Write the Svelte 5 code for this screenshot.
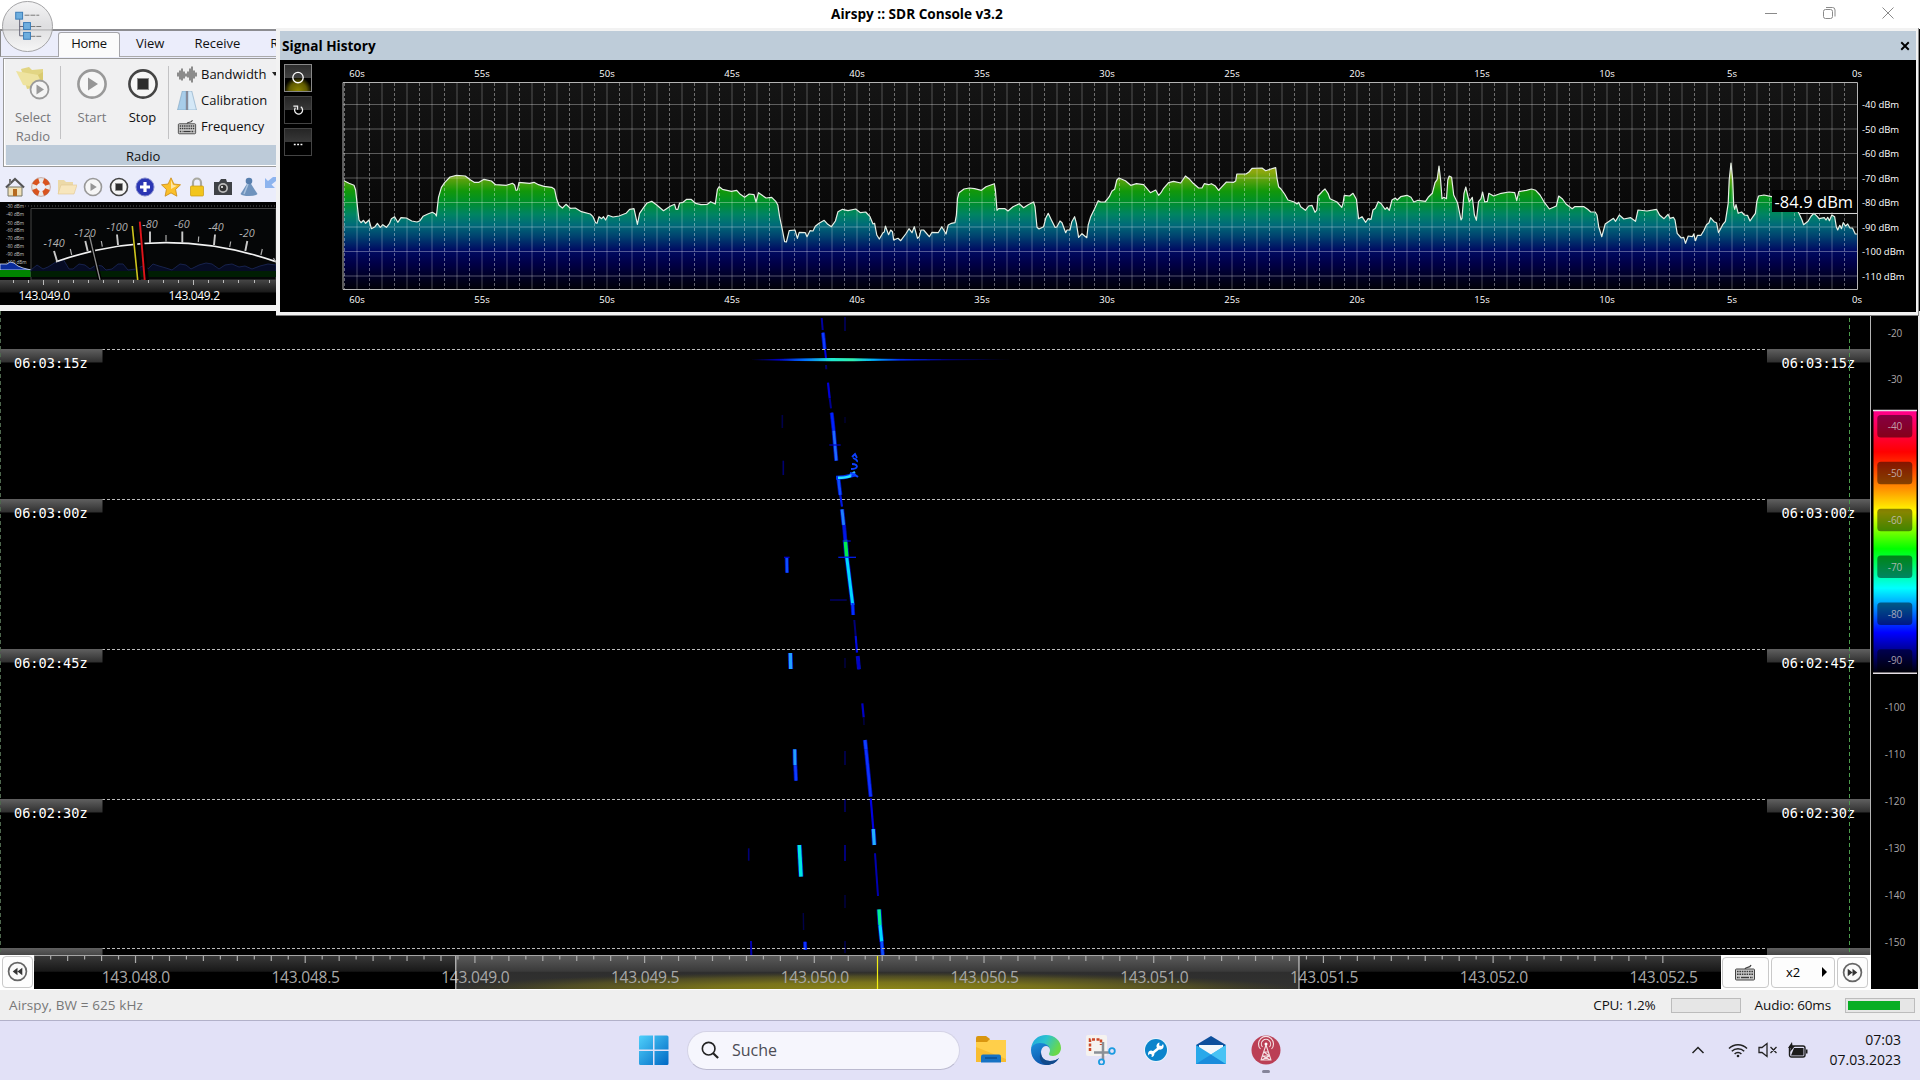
<script lang="ts">
	const seconds = [60, 55, 50, 45, 40, 35, 30, 25, 20, 15, 10, 5, 0];
	const solidLines = Array.from({ length: 60 }, (_, i) => 357 + i * 25);
	const dashedLines = Array.from({ length: 61 }, (_, i) => 344.5 + i * 25);
	const levels = Array.from({ length: 8 }, (_, i) => ({ y: 104.5 + i * 24.5, label: `${-40 - i * 10} dBm` }));

	const trace =
		'344,180.7 349,183.3 354,185.3 355.6,190 358,211.7 359,220 361,222.7 363.5,220.3 365.6,223.3 369,220 371.4,228.7 375,226.7 377.4,223.3 380.3,227.3 382.8,224.7 386.4,227.3 389.6,223.3 391.4,218.7 394.6,216.7 397.8,222.3 401,217.7 406.4,218 411.7,221 417,222 420,220.7 423,216.3 427.8,214 432.4,212.3 435.3,214 436.4,216 438.5,197.3 441.4,187.3 444.6,182.7 450,177 456.4,175.3 465.3,176 470.6,180 474.2,182.3 479,182.3 484,179.3 491.4,181 495.6,184.7 506.4,185.3 512.4,183.3 514.6,185 516,190.3 517.4,190 519,182.3 529.6,183.3 534,182.3 538.5,184.7 544,186.3 551.7,187.3 554.6,189.3 556.7,199.3 559,205.3 562.4,208 566,204.3 570.3,208.3 575.3,208 581.4,211.7 590.3,214 593,216.7 595.6,222.7 597,223.3 599,216.7 601.7,218.7 603.5,216.7 605.6,220 608,215.3 613,217 619,216 626,213.3 629.6,209.3 634,208.7 637.4,224.3 639.6,213.3 643,208.3 646.7,203.3 651.7,201.3 656.4,204.7 663.5,210.7 670.6,206 674.6,204.3 676,209.3 677.8,209.3 679.6,203 683,202.3 686.7,199.3 691,199.3 695.6,203.3 701,204.7 707.4,204.3 710.6,201.7 715.3,204 717.4,189.3 719.2,186.7 722.4,189.3 731.4,191.3 736.7,190.3 740.3,194.3 744.6,197.3 749.2,194 754,194.7 756,202 758.5,192.7 766,198 771.7,197.3 776,201.7 777.8,205 779.6,216.7 782.4,230 784.6,241.7 786.4,242 789.2,230.7 795,230 797.4,238.3 799.2,232.3 805.3,232.7 807,236.7 810,230.7 813,231 815.3,226.3 819,223.3 824.2,220.3 827.8,224.3 831.4,226.7 835.4,221 838,211.7 842.5,209.3 848,210.7 855.7,209 860.4,212.7 865.7,212 870,216.7 873,224 874.6,223.3 876.8,235 879.3,239 883,232.7 884.3,232 885.4,226 888.6,234.7 890.7,230 892.5,231.7 893.6,240 898,238.3 900.7,240.7 905.7,234 909,228.7 912,232.7 914.3,226.7 917.5,238.3 919.3,236.7 921,230 923.6,230 929.3,236.7 932,232.3 938.2,232.7 941.8,226.7 946,234 948.2,225 951.4,223.3 955,222.7 956.4,215 957.5,198.3 959,192.7 964,189 969.3,188 974.6,188.7 981.4,190.3 986,186.7 994.3,183.7 995.4,190 997,210.3 998.6,208.7 1005,208.7 1008,211 1013,206.7 1019.3,203.7 1023.6,207.7 1028.2,204.7 1033.6,202 1035,206.7 1037,227.3 1039,229 1043.6,226.7 1045.7,218.3 1048.2,213.3 1051.4,220 1055,227.3 1056.8,227 1060,221 1062,222.7 1065.7,232.7 1067,230 1070,230 1071.8,221.7 1074.6,216.7 1076.4,223.3 1078.6,237.3 1082,233.7 1086.8,237.7 1088.2,225 1090.7,216.7 1094.3,209.3 1098.2,200.7 1100.7,202 1105,202 1109.3,196.7 1112,191 1114.6,189.3 1116.8,180 1119,178 1125.4,180.7 1130.7,185.3 1136.4,183.7 1143.6,184.7 1147,188.7 1150.4,192.7 1155.7,190 1158.6,195.3 1161,192.7 1163.6,188.3 1168.6,182.7 1173.6,181.3 1180.7,183 1185.4,176 1189,178.7 1193.2,183.3 1198.6,188 1202,188 1204.3,183.7 1208.6,184.7 1211.4,183.7 1215,185.7 1218.6,190.3 1222,186.7 1226.4,182 1233.6,182.3 1235.7,181 1236.8,174 1246,174 1249,172 1252,168.3 1262,168 1265.7,170.7 1273,168.3 1275.7,167.7 1277,178.3 1278.6,186.7 1280.7,188.7 1284.6,194 1288,200 1294.3,202 1297,204 1298.6,202.3 1300.7,206.7 1305.4,210.3 1308.6,206 1312,205.3 1315,212.3 1316.8,210 1318,195.7 1320,194 1323,190.7 1325,189 1328,193.3 1330,198.7 1337,202 1341.8,207.3 1343,203.3 1344.3,195.3 1349.6,196 1353,193.3 1356.4,199.3 1358.6,218.7 1362,216.7 1365.7,222.3 1368,218.7 1371,219.3 1373,210 1375.4,208.3 1378.2,201.7 1381,203.5 1385.2,209.3 1387,207.5 1389.3,210.3 1392,200 1395.2,198 1397.2,200 1400.7,196.7 1407,195.3 1411,197.3 1413.8,202 1418,200.3 1425.5,201.3 1428.2,197.3 1432.3,193.3 1435,182.7 1437.2,179.3 1439,166 1440.6,180 1442,198.7 1444,197.3 1446.5,198.7 1447.8,180 1449.2,176 1451.6,177.3 1453.7,195 1457.5,202.7 1461,220 1462,218.3 1464,193.3 1465.8,187 1469.2,202 1472.3,197.3 1474.4,215 1476.4,220.3 1478.5,201.7 1481,198.7 1482.6,192 1484.7,202 1487.4,201.3 1488.8,193.3 1493.6,196 1501.2,193.3 1509,192 1514.7,192.7 1516.7,200.7 1518.8,191.7 1526.4,190.3 1531.5,189 1535.7,190.3 1540,195 1544.6,202.7 1549.4,209 1556.3,206 1558.7,196 1562.5,199 1566,204 1572.2,208.7 1574.6,206.7 1584,206.7 1587.7,209.3 1590.8,212 1595.2,212 1597,215 1598.7,226.7 1601.8,236.7 1605.2,224 1613.5,218.3 1615.6,221.3 1619.3,215 1623.8,219 1630.7,217.7 1635.5,221.3 1638,210 1647,211 1656.5,209.3 1659.6,215 1664,218.7 1668,214.3 1670,218.3 1673.4,217.3 1675,220 1677.2,233.3 1681.3,238 1683.7,237.3 1685.5,243.3 1688.2,236 1692.4,236.7 1693.7,234 1695.5,240.7 1697.5,235.3 1701,235.3 1703.7,230.7 1706.5,224.7 1709,222.7 1710.6,217.7 1714,221.7 1716.5,222.7 1718.5,232.7 1722.7,224.7 1725.4,221.3 1728.2,203.3 1729.2,180 1731,163 1732.7,180 1733.7,205 1734.7,209.3 1736,204.7 1738.2,213.3 1741.6,212 1744.4,215 1747.5,215.3 1750,221 1753,216.7 1755.4,213.3 1756.8,201.7 1758.5,196 1764,195 1771.6,196.7 1783,200 1798.4,212 1802,220 1803.6,224.7 1808,221.3 1811.2,216 1814,213.3 1817.4,216.7 1819,218.7 1824.3,217.7 1826,220 1827.7,217.3 1829.4,220.7 1831.8,215 1834.6,216.7 1836.3,226.7 1837.7,230 1839.8,225.3 1841.5,228.7 1843.2,222.7 1845.6,226 1847.7,224 1850,228 1852.5,228 1855.3,234 1857,234';

	// x1, y1, x2, y2, width, colour
	type Echo = [number, number, number, number, number, string];
	const echoes: Echo[] = [
		[821.7, 318, 822.7, 330, 2, '#0000a0'],
		[823, 332.7, 824.7, 349.3, 2.4, '#0a3cff'],
		[825, 350, 826, 358.3, 2, '#0000e0'],
		[826, 365, 826.3, 369.3, 2, '#000068'],
		[828, 382.7, 829.7, 398.3, 2.2, '#0000d8'],
		[829.7, 398.3, 831, 408.3, 2, '#000090'],
		[831.7, 412.7, 833.7, 430.7, 2.4, '#0024ff'],
		[833.7, 430.7, 836.3, 460.7, 2.6, '#1e6aff'],
		[829.3, 445, 840.7, 445, 1.2, '#0000c0'],
		[838.3, 478, 840.3, 495, 2.6, '#0a50ff'],
		[840.3, 495, 842, 506.7, 2.2, '#0018e0'],
		[842, 509.3, 843.7, 525, 2.8, '#1e80ff'],
		[844, 525, 845.3, 540, 2.4, '#0018e8'],
		[846.7, 556.7, 852.7, 605, 3, '#00d8ff'],
		[845.3, 540, 846.7, 556.7, 3.6, '#00ee50'],
		[852.5, 603, 853.2, 615, 2.4, '#0030ff'],
		[842.7, 541, 850.7, 541, 1.2, '#0000e0'],
		[838.3, 557.3, 856, 557.3, 1.2, '#0020ff'],
		[830, 600, 846.7, 600, 1.6, '#000060'],
		[854.3, 620, 855.7, 636, 2, '#000078'],
		[855.7, 636, 857, 652.7, 2.2, '#0008e0'],
		[857.7, 656, 859, 669.3, 2.4, '#0000c8'],
		[862.3, 703.3, 863.7, 717.3, 2.2, '#0000c8'],
		[863.7, 717.3, 864, 725, 1.6, '#000040'],
		[865, 740, 866, 749.3, 2.8, '#1040ff'],
		[866, 749.3, 870.7, 796.7, 2.6, '#0a32ff'],
		[870.7, 798.3, 873.3, 829, 2.2, '#0000e0'],
		[873.3, 829, 874.3, 845, 3.2, '#20b0ff'],
		[875, 853.3, 878, 896, 2, '#0000b0'],
		[879, 909.3, 880, 925, 3.4, '#00f090'],
		[880, 925, 881.7, 941.7, 3.2, '#00d8ff'],
		[881.7, 941.7, 882.7, 955, 2.6, '#0a50ff'],
		[786.7, 557.3, 787, 572.7, 2.4, '#0a50ff'],
		[784, 557.3, 789.6, 557.3, 1.2, '#0000d0'],
		[790.3, 653, 790.7, 669, 3.4, '#20a0ff'],
		[794.7, 749.3, 795, 765.3, 3, '#20a0ff'],
		[795.3, 765.3, 796, 780.7, 2.6, '#0a3cff'],
		[799.3, 845, 801, 876.7, 3.6, '#00e8e0'],
		[805, 941.7, 805.3, 950, 2.4, '#0a30ff'],
		[803.3, 913, 803.6, 930, 1.4, '#000048'],
		[748.7, 848.3, 748.7, 860.7, 1.6, '#000078'],
		[751, 941, 751.3, 955, 2, '#0000b0'],
		[782.3, 415, 782.3, 428, 1.6, '#000048'],
		[783.3, 460.7, 783.3, 475, 1.6, '#000070'],
		[845, 317, 845, 331, 1.6, '#000060'],
		[845, 417, 845, 423, 1.6, '#000030'],
		[845, 658, 845, 668, 1.6, '#000040'],
		[845, 751, 845, 765, 1.6, '#000058'],
		[845, 799, 845, 812, 1.6, '#000068'],
		[845, 845, 845, 861, 1.8, '#000088'],
		[845, 895, 845, 908, 1.6, '#000040'],
		[845, 941, 845, 953, 1.6, '#000050']
	];
	// the stronger echoes bleed into a blue fringe
	const strong = echoes.filter((e) => e[4] > 2.3);

	const times = [
		{ y: 349.5, label: '06:03:15z' },
		{ y: 499.5, label: '06:03:00z' },
		{ y: 649.5, label: '06:02:45z' },
		{ y: 799.5, label: '06:02:30z' },
		{ y: 948.5, label: '' }
	];

	const scale = Array.from({ length: 14 }, (_, i) => ({ value: -20 - i * 10, y: 332.8 + i * 46.85 }));

	const freqs = ['143.048.0', '143.048.5', '143.049.0', '143.049.5', '143.050.0', '143.050.5', '143.051.0', '143.051.5', '143.052.0', '143.052.5'];
	const ticks = Array.from({ length: 97 }, (_, i) => ({
		x: 33.7 + i * 16.97,
		h: (i - 6) % 10 === 0 ? 7 : i % 2 === 0 ? 5 : 3.5
	}));

	const dial = [
		{ label: '-140', x: 54, y: 247, x1: 54, y1: 251, x2: 57.3, y2: 262 },
		{ label: '-120', x: 85, y: 237, x1: 85.3, y1: 241, x2: 87.7, y2: 251 },
		{ label: '-100', x: 117, y: 231, x1: 117, y1: 234.5, x2: 118, y2: 245 },
		{ label: '-80', x: 150, y: 228, x1: 150, y1: 231.5, x2: 150, y2: 243 },
		{ label: '-60', x: 182, y: 228, x1: 182.3, y1: 231.5, x2: 182.3, y2: 243 },
		{ label: '-40', x: 216, y: 231, x1: 215, y1: 234.5, x2: 214, y2: 245 },
		{ label: '-20', x: 247, y: 237, x1: 247.3, y1: 241, x2: 245.3, y2: 251 }
	];
	const miniLevels = [206, 214, 223, 230, 238, 246, 254, 262.5];
</script>

{#snippet play(dark: boolean)}
	<svg viewBox="0 0 32 32">
		<circle cx="16" cy="16" r="13.6" fill="#f6f6f6" stroke={dark ? '#444' : '#999'} stroke-width="2.6" />
		{#if dark}
			<rect x="10.5" y="10.5" width="11" height="11" fill="#2c2c2c" stroke="#888" />
		{:else}
			<path d="M12 9.5v13l10-6.5z" fill="#969696" />
		{/if}
	</svg>
{/snippet}

{#snippet keyboard()}
	<svg viewBox="0 0 22 18">
		<path d="M11 6c1-3 5 0 6-4" fill="none" stroke="#444" stroke-width="1.2" />
		<rect x="1.5" y="6" width="19" height="11" rx="1" fill="#ccc" stroke="#444" />
		<path d="M3 8.5h16M3 11.2h16M3 14.5h3M16 14.5h3" stroke="#3a3a3a" stroke-width="1.5" stroke-dasharray="1.6 .8" />
		<path d="M7 14.5h8" stroke="#3a3a3a" stroke-width="1.4" />
	</svg>
{/snippet}

<div class="screen">
	<header class="titlebar">
		<h1>Airspy :: SDR Console v3.2</h1>
		<svg class="caption" viewBox="0 0 150 28" fill="none" stroke="#8a8a8a">
			<path d="M15 14.5h12" />
			<rect x="73.5" y="10.5" width="9" height="9" rx="2" />
			<path d="M76 8.5h6.5a2.5 2.5 0 0 1 2.5 2.5v6.500" />
			<path d="M132.5 8.500l11 11m0-11l-11 11" />
		</svg>
	</header>

	<section class="ribbon">
		<nav class="tabs">
			<span class="tab active">Home</span>
			<span class="tab view">View</span>
			<span class="tab receive">Receive</span>
			<span class="tab">Rec</span>
		</nav>
		<div class="panel">
			<div class="groups">
				<div class="big select dim">
					<svg viewBox="0 0 34 34">
						<path d="M5 3l8-2 3 3 11-1v17l-16 3z" fill="#e2d583" />
						<path d="M0 5l22 4 5 13-20-3z" fill="#eee3a0" />
						<path d="M22 9l5-3v12z" fill="#d9ca70" />
						<circle cx="23.5" cy="23.5" r="9" fill="#f4f4f4" stroke="#9a9a9a" stroke-width="1.8" />
						<path d="M20.5 18.5v10l7.500-5z" fill="#999" />
					</svg>
					<span>Select<br />Radio</span>
				</div>
				<i class="rule"></i>
				<div class="big start dim">{@render play(false)}<span>Start</span></div>
				<div class="big stop">{@render play(true)}<span>Stop</span></div>
				<i class="rule"></i>
				<div class="rows">
					<div class="row">
						<svg viewBox="0 0 20 18"><path d="M1 7v4M3 5v9M5 3v12M7 6v7M9 8v3M11 6v6M13 3v12M15 1v16M17 5v8M19 7v4" stroke="#555" stroke-width="1.3" /></svg>
						Bandwidth <b class="caret"></b>
					</div>
					<div class="row">
						<svg viewBox="0 0 20 20"><path d="M5 0h4v20H0z" fill="#a8cdea" stroke="#7aa0be" stroke-width=".6" /><path d="M15 0h-4v20h9z" fill="#d4e8f7" stroke="#7aa0be" stroke-width=".6" /><path d="M10 0v20" stroke="#667" stroke-width="1.4" /></svg>
						Calibration
					</div>
					<div class="row">{@render keyboard()} Frequency</div>
				</div>
			</div>
			<div class="group-name">Radio</div>
		</div>
		<div class="quick">
			<svg viewBox="0 0 20 20"><path d="M3 10h14v9H3z" fill="#efe0b8" stroke="#776" /><path d="M1 10.5L10 2l9 8.5" fill="none" stroke="#555" stroke-width="2.2" /><path d="M4 2h2v5H4z" fill="#777" /><path d="M8 12h4v7H8z" fill="#b56a20" /></svg>
			<svg viewBox="0 0 20 20"><circle cx="10" cy="10" r="6.8" fill="none" stroke="#e8e8e8" stroke-width="5" /><circle cx="10" cy="10" r="6.8" fill="none" stroke="#d9531e" stroke-width="5" stroke-dasharray="6.2 4.48" stroke-dashoffset="-2.2" /><circle cx="10" cy="10" r="9.4" fill="none" stroke="#a76a50" stroke-width=".5" /></svg>
			<svg viewBox="0 0 20 20"><path d="M1 3h6l2 2h7v12H1z" fill="#ecd9a8" /><path d="M4 8h16l-3 9H1z" fill="#f7e6bd" stroke="#e0c892" stroke-width=".6" /></svg>
			{@render play(false)}
			{@render play(true)}
			<svg viewBox="0 0 20 20"><circle cx="10" cy="10" r="9" fill="#2b36b4" stroke="#8088cc" /><path d="M10 5v10M5 10h10" stroke="#fff" stroke-width="3.2" /></svg>
			<svg viewBox="0 0 20 20"><path d="M10 .8l2.900 6.200 6.600.8-4.900 4.600 1.300 6.800-5.900-3.300-5.900 3.300 1.300-6.800L.5 7.800l6.600-.8z" fill="#fbc02a" stroke="#c98a16" stroke-width=".8" /><path d="M10 3l2 5 4 .8-6 3.200z" fill="#fff" opacity=".6" /></svg>
			<svg viewBox="0 0 20 20"><path d="M6 10V5.500a4 4 0 0 1 8 0V10" fill="none" stroke="#a9a9a0" stroke-width="2.2" /><rect x="3.5" y="9" width="13" height="10" rx="1" fill="#f2c51c" stroke="#c99a10" stroke-width=".7" /></svg>
			<svg viewBox="0 0 20 20"><path d="M1 5h5l2-3h5l1 3h5v13H1z" fill="#3f4246" /><circle cx="10" cy="11" r="5" fill="#bbb" /><circle cx="10" cy="11" r="3.3" fill="#333" /><circle cx="9" cy="10" r="1" fill="#fff" /></svg>
			<svg viewBox="0 0 20 20"><path d="M8.5 6h3l7 11a9 3 0 0 1-17 0z" fill="#6f93bd" /><circle cx="10" cy="4" r="3.3" fill="#587fae" /><path d="M9 7l-4 10" stroke="#a9c2de" stroke-width="1.5" /></svg>
			<svg viewBox="0 0 20 20"><path d="M0 1v10h10l-3.500-3.500L16 0H8L3 4z" fill="#8db4ee" /></svg>
		</div>
		<svg class="meter" viewBox="0 202 276 78">
			<rect y="202" width="276" height="78" fill="#020202" />
			<path d="M25 206h251" stroke="#555" stroke-width="1" stroke-dasharray="1 2" />
			<g font-size="4.6" fill="#c4c4c4">
				{#each miniLevels as y, i}
					<text x="6" y={y + 1.5}>{-30 - i * 10} dBm</text>
				{/each}
			</g>
			<path d="M0 270v-6l7 0 3-2 4 1 4 3 5 2 8 2z" fill="#0a2c9c" stroke="#dbe6ff" stroke-width=".8" />
			<rect y="270" width="31" height="7" fill="#008400" />
			<path d="M31 280V208.500H276V280z" fill="#050607" stroke="#444" />
			<path d="M31 270L37 265 43 269 48 267 56 262 63 259 69 269 73 269 79 264 85 265 90 269 96 265 102 266 106 270 112 269 118 264 123 264 128 270 136 269 145 265 148 269 153 264 159 266 166 268 172 270 180 264 186 265 191 269 199 265 206 263 212 264 219 269 225 265 232 264 239 267 245 266 252 269 260 266 268 264 276 265V272H31z" fill="#060b24" stroke="#17224c" stroke-linejoin="round" />
			<path d="M31 271h245v6H31z" fill="#001e03" />
			<path d="M56 261.700Q166 223.700 276 261.700" fill="none" stroke="#f2f2f2" stroke-width="1.7" />
			{#each dial as d}
				<path d="M{d.x1} {d.y1}L{d.x2} {d.y2}" stroke="#c9c9c9" stroke-width="1.9" />
				<text class="dial" x={d.x} y={d.y}>{d.label}</text>
			{/each}
			<path d="M70.3 249l1.400 6M101.300 241l1 5.700M166 235v6.500M198.700 236.500l-.4 5.500M230.700 241.500l-1 5.500M262.300 249l-1.400 6M273.500 258l2 4" stroke="#aaa" stroke-width="1.2" />
			<path d="M92 246l8 34M134 232l5 48M141 232l6 48" stroke="#000" stroke-width="4" />
			<path d="M89.3 235l10.700 45" stroke="#8a8a8a" stroke-width="1.3" />
			<path d="M132.3 226l5.400 54" stroke="#cfc51e" stroke-width="1.6" />
			<path d="M139.8 221.700l4.900 58.300" stroke="#e0141a" stroke-width="1.9" />
		</svg>
		<svg class="mini-axis" viewBox="0 280 276 25">
			<path d="M13.5 280v3M28.500 280v3M43.500 280v5M58.500 280v3M73.500 280v3M88.500 280v3M103.500 280v3M118.500 280v3M133.500 280v3M148.500 280v3M163.500 280v3M178.500 280v3M193.500 280v5M208.500 280v3M223.500 280v3M238.500 280v3M254.500 280v3M269.500 280v3" stroke="#bbb" />
			<text x="18.5" y="300" textLength="51.5">143.049.0</text>
			<text x="168.5" y="300" textLength="51.5">143.049.2</text>
		</svg>
	</section>

	<svg class="orb" viewBox="0 0 54 54">
		<defs><linearGradient id="orb" x2="0" y2="1"><stop offset="0" stop-color="#f4f4f5" /><stop offset=".5" stop-color="#dedee0" /><stop offset="1" stop-color="#f6f6f6" /></linearGradient></defs>
		<circle cx="27" cy="27" r="25.5" fill="url(#orb)" stroke="#a2a2a4" />
		<path d="M1 30.5h52" stroke="#999" stroke-width=".8" />
		<path d="M19 17v19.500h5M19 27h5" fill="none" stroke="#667" />
		<path d="M24 15.5h15M30 27h11M30 37h11" stroke="#777" stroke-dasharray="5 1" />
		<g fill="#6eaede" stroke="#3a7cb8"><rect x="15" y="12.5" width="7" height="7" /><rect x="23" y="23" width="7" height="7" /><rect x="23" y="33" width="7" height="7" /></g>
	</svg>

	<section class="fall">
		<svg class="waterfall" viewBox="0 311 1871 644">
			<defs>
				<linearGradient id="flash" x1="0" x2="1">
					<stop offset="0" stop-color="#000018" />
					<stop offset=".1" stop-color="#0000c0" />
					<stop offset=".2" stop-color="#0070ff" />
					<stop offset=".3" stop-color="#20e8d0" />
					<stop offset=".38" stop-color="#30f0b0" />
					<stop offset=".46" stop-color="#00b0ff" />
					<stop offset=".56" stop-color="#0028f0" />
					<stop offset=".75" stop-color="#000078" />
					<stop offset="1" stop-color="#000010" />
				</linearGradient>
				<linearGradient id="plate" x2="0" y2="1"><stop offset="0" stop-color="#606060" /><stop offset="1" stop-color="#2e2e2e" /></linearGradient>
				<filter id="soft" filterUnits="userSpaceOnUse" x="700" y="311" width="400" height="644"><feGaussianBlur stdDeviation=".45" /></filter>
			</defs>
			<g filter="url(#soft)">
				{#each strong as [x1, y1, x2, y2, w]}
					<path d="M{x1} {y1}L{x2} {y2}" stroke="#0010e0" stroke-opacity=".75" stroke-width={w + 1.6} />
				{/each}
				{#each echoes as [x1, y1, x2, y2, w, colour]}
					<path d="M{x1} {y1}L{x2} {y2}" stroke={colour} stroke-width={w} />
				{/each}
				<path d="M836 477.800q8 0 15-2.200l4.500-1" fill="none" stroke="#0030f0" stroke-width="4" />
				<path d="M838 477.800q8 0 13-2" fill="none" stroke="#28e0ff" stroke-width="2.4" />
				<path d="M850 475l5-3" stroke="#28b0ff" stroke-width="2.4" />
				<path d="M852 457l3-3 2 4M853 458q5 2 4 4M852 464q5 0 5 3M851 469q5 0 6-2M850 473q5 1 8 4" fill="none" stroke="#0a40ff" stroke-width="1.8" />
				<path d="M751.7 359.500q40-1.400 80-1.600 20 0 50 .8 70 .3 135 .8-70 1-135 1.200-30 .6-50 .6-40-.2-80-1.200z" fill="url(#flash)" />
			</g>
			{#each times as t}
				<path d="M102 {t.y}H1766" stroke="#bcbcbc" stroke-dasharray="3 2" />
				<rect x="0" y={t.y - 0.5} width="102.5" height="13.5" fill="url(#plate)" />
				<rect x="1767" y={t.y - 0.5} width="103.5" height="13.5" fill="url(#plate)" />
				<text x="14" y={t.y + 18}>{t.label}</text>
				<text x="1781.5" y={t.y + 18}>{t.label}</text>
			{/each}
			<path d="M.5 311V955" stroke="#4d664d" stroke-dasharray="4 3" />
			<path d="M1849.5 311V953" stroke="#4c9a4c" stroke-dasharray="4 3" />
			<path d="M1870.5 311V955" stroke="#b4b4b4" />
		</svg>

		<div class="axis">
			<button class="rewind" aria-label="Back">
				<svg viewBox="0 0 24 24"><circle cx="12" cy="12" r="9.3" fill="#fafafa" stroke="#666" stroke-width="1.8" /><path d="M12 8v8l-5-4zM17 8v8l-5-4z" fill="#333" /></svg>
			</button>
			<svg class="freq" viewBox="34 955 1687 34">
				<defs>
					<linearGradient id="band" x2="0" y2="1"><stop offset="0" stop-color="#3a3a3a" /><stop offset=".48" stop-color="#181818" /><stop offset=".5" stop-color="#000" /></linearGradient>
					<linearGradient id="lit" x2="0" y2="1"><stop offset="0" stop-color="#5c5c5c" /><stop offset=".48" stop-color="#3a3a3a" /><stop offset=".5" stop-color="#2e2e2e" /><stop offset="1" stop-color="#323230" /></linearGradient>
					<radialGradient id="glow" cx=".5" cy="1" r=".5"><stop offset="0" stop-color="#8c8618" /><stop offset=".4" stop-color="#857e18" stop-opacity=".85" /><stop offset=".75" stop-color="#77701a" stop-opacity=".45" /><stop offset="1" stop-color="#555018" stop-opacity="0" /></radialGradient>
				</defs>
				<rect x="34" y="955" width="1687" height="34" fill="url(#band)" />
				<rect x="456" y="955" width="843" height="34" fill="url(#lit)" />
				<rect x="456" y="955" width="843" height="34" fill="url(#glow)" />
				<path d="M34 955.5H1721" stroke="#a5a5a5" />
				{#each ticks as t}
					<path d="M{t.x} 956v{t.h}" stroke="#aaa" stroke-width="1.2" />
				{/each}
				{#each freqs as f, i}
					<text x={101.7 + i * 169.75} y="983" textLength="68.5">{f}</text>
				{/each}
				<path d="M455.8 956v33M1299 956v33" stroke="#e4e4e4" />
				<path d="M877.5 956v33" stroke="#f2ee12" stroke-width="1.2" />
			</svg>
			<div class="zoom">
				<button class="kbd" aria-label="Keyboard">{@render keyboard()}</button>
				<button class="factor"><span>x2</span><i></i></button>
				<button class="forward" aria-label="Forward">
					<svg viewBox="0 0 24 24"><circle cx="12" cy="12" r="9.3" fill="#fafafa" stroke="#666" stroke-width="1.8" /><path d="M7 8v8l5-4zM12 8v8l5-4z" fill="#333" /></svg>
				</button>
			</div>
		</div>

		<svg class="scale" viewBox="1871 311 49 678">
			<defs>
				<linearGradient id="heat" x2="0" y2="1">
					<stop offset="0" stop-color="#ff0090" />
					<stop offset=".16" stop-color="#ff0000" />
					<stop offset=".3" stop-color="#ff9000" />
					<stop offset=".39" stop-color="#ffff00" />
					<stop offset=".53" stop-color="#00ff00" />
					<stop offset=".68" stop-color="#00ffff" />
					<stop offset=".85" stop-color="#0000ff" />
					<stop offset="1" stop-color="#000010" />
				</linearGradient>
			</defs>
			<rect x="1873.5" y="410" width="43" height="262" fill="url(#heat)" />
			<path d="M1873 410.5h44M1873 673.300h44" stroke="#e6dfe6" stroke-width="1.4" />
			{#each scale as s, i}
				{#if i > 1 && i < 8}
					<rect x="1877.3" y={s.y - 11.5} width="35" height="22.5" rx="3.5" fill="#000" fill-opacity=".48" />
				{/if}
				<text class:over={i > 1 && i < 8} x="1895" y={s.y + 3.7}>{s.value}</text>
			{/each}
			<rect x="1918" y="311" width="2" height="678" fill="#e8e8e8" />
		</svg>
	</section>

	<footer class="status">
		<span class="device">Airspy, BW = 625 kHz</span>
		<span>CPU: 1.2%</span>
		<i class="bar"></i>
		<span class="audio">Audio: 60ms</span>
		<i class="bar"><b></b></i>
	</footer>

	<section class="history">
		<div class="history-title"><h2>Signal History</h2><svg viewBox="0 0 12 12"><path d="M1.5 1.500l9 9m0-9l-9 9" stroke="#000" stroke-width="2.3" /></svg></div>
		<div class="history-body">
			<div class="tools">
				<button class="on" aria-label="Mark"><svg viewBox="0 0 28 28"><circle cx="14" cy="13.5" r="5.6" fill="none" stroke="#fff" stroke-width="1.4" /></svg></button>
				<button aria-label="Reset"><svg viewBox="0 0 28 28"><path d="M9 9.800h4.500v4M11.200 11.500a4.300 4.300 0 1 0 5.800-1" fill="none" stroke="#f0f0f0" stroke-width="1.4" /></svg></button>
				<button aria-label="More"><svg viewBox="0 0 28 28"><path d="M9.5 16.700h9.500" stroke="#fff" stroke-width="1.6" stroke-dasharray="2 1.6" /></svg></button>
			</div>
			<svg class="plot" viewBox="316 60 1601 252">
				<defs>
					<linearGradient id="signal" gradientUnits="userSpaceOnUse" x1="0" x2="0" y1="160" y2="289">
						<stop offset="0" stop-color="#b4b010" />
						<stop offset=".1" stop-color="#86a60e" />
						<stop offset=".24" stop-color="#12980a" />
						<stop offset=".32" stop-color="#009028" />
						<stop offset=".42" stop-color="#008462" />
						<stop offset=".5" stop-color="#006c78" />
						<stop offset=".6" stop-color="#003e6e" />
						<stop offset=".7" stop-color="#000a62" />
						<stop offset=".8" stop-color="#000048" />
						<stop offset=".93" stop-color="#00001c" />
						<stop offset="1" stop-color="#000008" />
					</linearGradient>
					<linearGradient id="back" x2="0" y2="1"><stop offset="0" stop-color="#151515" /><stop offset="1" stop-color="#000" /></linearGradient>
				</defs>
				<rect x="343" y="82" width="1514" height="207" fill="url(#back)" />
				<polygon points="344,289 {trace} 1857,289" fill="url(#signal)" />
				<g stroke="#fff" stroke-opacity=".28">
					{#each solidLines as x}<path d="M{x} 82V289" />{/each}
				</g>
				<g stroke="#fff" stroke-opacity=".38" stroke-dasharray="3 2">
					{#each dashedLines as x}<path d="M{x} 83V289" />{/each}
				</g>
				<g stroke="#fff" stroke-opacity=".32">
					{#each levels as l}<path d="M343 {l.y}H1857" />{/each}
				</g>
				<polyline points={trace} fill="none" stroke="#e6efe6" stroke-width="1.2" stroke-linejoin="round" />
				<path d="M343 82.5H1857.500V289.500H343z" fill="none" stroke="#b4b4b4" />
				{#each seconds as s, i}
					<text class="mid" x={357 + i * 125} y="77">{s}s</text>
					<text class="mid" x={357 + i * 125} y="303">{s}s</text>
				{/each}
				{#each levels as l}<text x="1862" y={l.y + 3.5}>{l.label}</text>{/each}
				<path d="M1799 213.5H1857" stroke="#d4d4d4" />
				<rect x="1772" y="190" width="85" height="22" fill="#000" />
				<text class="reading" x="1774.5" y="207.5" textLength="78.5">-84.9 dBm</text>
			</svg>
		</div>
	</section>

	<footer class="taskbar">
		<div class="apps">
			<svg class="win" viewBox="0 0 30 30">
				<defs>
					<linearGradient id="win" x2="1" y2="1"><stop offset="0" stop-color="#4fd0fb" /><stop offset="1" stop-color="#0068c4" /></linearGradient>
				</defs>
				<path d="M0 2a1.500 1.500 0 0 1 1.500-1.500H14v14H0zM15.500.5H28A1.500 1.500 0 0 1 29.500 2v12.500h-14zM0 16h14v14H1.500A1.500 1.500 0 0 1 0 28.500zM15.500 16h14v12.500A1.500 1.500 0 0 1 28 30H15.500z" fill="url(#win)" />
			</svg>
			<div class="search">
				<svg viewBox="0 0 20 20" fill="none" stroke="#222"><circle cx="8.5" cy="8.5" r="7" stroke-width="1.8" /><path d="M13.5 13.500L19 19" stroke-width="2.4" /></svg>
				Suche
			</div>
			<svg class="app" viewBox="0 0 30 30">
				<path d="M0 3a2 2 0 0 1 2-2h8l4 3-2 3H0z" fill="#d9960f" />
				<path d="M0 7h11l2-2h17v22H0z" fill="#ffcf4a" /><path d="M0 27V12l30 12v3z" fill="#f8bd31" />
				<path d="M5 27.5v-6a2 2 0 0 1 2-2h16a2 2 0 0 1 2 2v6z" fill="#1672c4" /><path d="M9 23h12" stroke="#0c4f92" stroke-width="1.5" />
			</svg>
			<svg class="app" viewBox="0 0 30 30">
				<defs>
					<linearGradient id="edge1" x2="1" y2=".4"><stop offset="0" stop-color="#1da3e0" /><stop offset=".5" stop-color="#2cc3cf" /><stop offset="1" stop-color="#6ad84a" /></linearGradient>
					<linearGradient id="edge2" x2=".6" y2="1"><stop offset="0" stop-color="#1c90dc" /><stop offset="1" stop-color="#0c4ea6" /></linearGradient>
				</defs>
				<path d="M0 14C1 5 7 0 15 0c9 0 15 6 15 13 0 5-4 8-8 8-3 0-4-1-4-2s1-2 1-4c0-3-3-6-8-6-6 0-10 3-11 5z" fill="url(#edge1)" />
				<path d="M0 15c0-4 4-7 9-7 6 0 10 3 10 7 0-2-2-4-4-4-3 0-5 3-5 7 0 5 4 8 9 8 4 0 7-1 9-3-3 5-8 7-13 7C7 30 0 24 0 15z" fill="url(#edge2)" />
				<path d="M10 17c0 6 4 9 9 9 4 0 7-1 9-3-3 5-8 7-12 7-6-1-9-7-6-13z" fill="#114a8b" />
			</svg>
			<svg class="app" viewBox="0 0 30 30">
				<rect x="0" y="0" width="21" height="21" rx="2" fill="#f5f2ef" />
				<path d="M4 16V4.500h11V10" fill="none" stroke="#cc4726" stroke-width="2.5" stroke-dasharray="3 1.5" />
				<path d="M17 7v18M8 17.500h16" stroke="#8a8f96" stroke-width="2.5" />
				<g fill="none" stroke="#1c9be0" stroke-width="1.8"><circle cx="26" cy="16" r="2.8" /><circle cx="15.5" cy="27" r="2.6" /></g>
			</svg>
			<svg class="app" viewBox="0 0 30 30">
				<circle cx="15" cy="15" r="12" fill="#e9f4fc" /><circle cx="15" cy="15" r="11" fill="#0b84cc" />
				<path d="M10.5 19l8.500-7" stroke="#fff" stroke-width="2.6" /><path d="M22 9a3.600 3.600 0 1 1-3.500-1.500l-.4 3 2.400.6zM7.500 20.500a3.200 3.200 0 1 1 3 1.500l.4-2.600-2.200-.6z" fill="#fff" />
			</svg>
			<svg class="app" viewBox="0 0 30 30">
				<path d="M0 10L15 1l15 9v5H0z" fill="#0d4f9c" /><path d="M3 10h24v10H3z" fill="#f3f7fb" />
				<path d="M0 10l15 9.500L30 10v19H0z" fill="#28a8ea" /><path d="M30 29L15 19.500 0 29z" fill="#1a8cdc" /><path d="M15 19.5L30 10v19z" fill="#49c3f4" />
			</svg>
			<div class="running">
				<svg class="app" viewBox="0 0 30 30">
					<circle cx="15" cy="15" r="14.5" fill="#bb3f55" />
					<g fill="none" stroke="#f3dfe2" stroke-width="1.1"><path d="M15 10l-5 15M15 10l5 15M12.800 17h4.500M11.500 21h7l-8 4M12.800 17l5.700 4M11.500 21l8 4M9.500 25h11" /><path d="M11.500 12a4.600 4.600 0 1 1 7 0M9.500 14a7.500 7.500 0 1 1 11 0" /></g>
					<circle cx="15" cy="9" r="1.5" fill="#fff" />
				</svg>
				<i></i>
			</div>
		</div>
		<div class="tray">
			<svg class="chev" viewBox="0 0 14 10"><path d="M1.5 8L7 2.500 12.500 8" fill="none" stroke="#222" stroke-width="1.5" /></svg>
			<svg class="wifi" viewBox="0 0 20 16" fill="none" stroke="#222" stroke-width="1.5"><path d="M1 6.500a12.600 12.600 0 0 1 18 0M3.800 9.300a8.700 8.700 0 0 1 12.400 0M6.600 12a4.800 4.800 0 0 1 6.800 0" /><circle cx="10" cy="14" r="1.3" fill="#222" stroke="none" /></svg>
			<svg class="vol" viewBox="0 0 20 16" fill="none" stroke="#222" stroke-width="1.3"><path d="M1 5.500h3L9 1.500v13l-5-4H1zM12.500 5l6 6m0-6l-6 6" /></svg>
			<svg class="bat" viewBox="0 0 20 16"><rect x="1.5" y="4" width="15.5" height="11" rx="2" fill="none" stroke="#1c1c1c" stroke-width="1.4" /><path d="M6 6h9.500v7.500H3zM18 7.500h1.500v4H18z" fill="#1c1c1c" /><path d="M4 0L0 6h2.500L2 10l5-6H4.500z" fill="#1c1c1c" /></svg>
			<div class="clock"><span>07:03</span><span>07.03.2023</span></div>
		</div>
	</footer>
</div>

<style>
	:global(body) {
		background: #000;
		overflow: hidden;
	}
	.screen {
		position: relative;
		display: flex;
		flex-direction: column;
		width: 1920px;
		height: 1080px;
		overflow: hidden;
		background: #000;
		font-family: 'Open Sans', 'Noto Sans', sans-serif;
		font-size: 13px;
		color: #111;
	}
	svg {
		display: block;
		flex: none;
	}
	button {
		padding: 0;
		font: inherit;
		cursor: pointer;
	}

	.titlebar {
		display: flex;
		align-items: center;
		justify-content: space-between;
		height: 29px;
		box-sizing: border-box;
		padding: 0 20px 3px 831px;
		background: #fff;
	}
	h1,
	h2 {
		margin: 0;
		font-size: 13.6px;
		font-weight: 700;
		color: #000;
		white-space: nowrap;
	}
	.caption {
		width: 150px;
		height: 28px;
	}

	.ribbon {
		width: 276px;
		height: 282px;
		box-sizing: border-box;
		overflow: hidden;
		background: #ebedfb;
		border-top: 2px solid #8c8c90;
		border-bottom: 6px solid #f2f2f2;
	}
	.tabs {
		display: flex;
		height: 26px;
		padding: 1px 0 0 58px;
		box-sizing: border-box;
		border-left: 1px solid #888;
		border-bottom: 1px solid #aaa;
	}
	.tab {
		flex: none;
		padding: 2px 0 0;
	}
	.tab.active {
		width: 62px;
		height: 25px;
		box-sizing: border-box;
		margin-left: -1px;
		padding-top: 1px;
		text-align: center;
		background: #fbfbfb;
		border: 1px solid #a5a5aa;
		border-bottom: 0;
		border-radius: 3px 3px 0 0;
		letter-spacing: -0.3px;
	}
	.view {
		margin-left: 16px;
	}
	.receive {
		margin: 0 30px;
	}
	.panel {
		height: 109px;
		margin: 1px 0 0 3px;
		padding: 0 0 4px 2px;
		box-sizing: border-box;
		background: #f0f0f1;
		border: 1px solid #999;
		border-right: 0;
		box-shadow: inset 1px -2px 0 #fff;
	}
	.groups {
		display: flex;
		height: 86px;
	}
	.big {
		display: flex;
		flex: none;
		flex-direction: column;
		align-items: center;
		text-align: center;
		line-height: 19px;
		width: 50px;
		padding-top: 9px;
		box-sizing: border-box;
	}
	.big svg {
		width: 32px;
		height: 32px;
		margin-bottom: 8px;
	}
	.big.select {
		width: 54px;
		padding-top: 7px;
	}
	.big.select svg {
		width: 34px;
		height: 34px;
	}
	.big.start {
		margin-left: 6px;
	}
	.big.stop {
		width: 51px;
	}
	.dim {
		color: #77777a;
	}
	.rule {
		flex: none;
		width: 1px;
		height: 73px;
		margin-top: 7px;
		background: #c2c2c4;
	}
	.rows {
		display: flex;
		flex-direction: column;
		padding: 2px 0 0 8px;
	}
	.row {
		display: flex;
		align-items: center;
		gap: 4px;
		height: 26px;
		white-space: nowrap;
	}
	.row svg {
		width: 20px;
		height: 19px;
	}
	.caret {
		border: 3px solid transparent;
		border-top: 4px solid #222;
		margin: 2px 0 0 2px;
	}
	.group-name {
		height: 18px;
		line-height: 19px;
		padding: 2px 0 0 120px;
		background: #bdcbd9;
	}
	.quick {
		display: flex;
		align-items: center;
		gap: 6px;
		height: 35px;
		padding: 5px 0 0 5px;
		box-sizing: border-box;
	}
	.quick svg {
		width: 20px;
		height: 20px;
	}
	.meter {
		width: 276px;
		height: 78px;
	}
	.dial {
		font-size: 10.8px;
		font-style: italic;
		fill: #b0b0b0;
		text-anchor: middle;
	}
	.mini-axis {
		width: 276px;
		height: 25px;
		background: linear-gradient(#454545, #1a1a1a 48%, #000 52%);
		font-size: 12px;
		fill: #fff;
	}

	.orb {
		position: absolute;
		left: 1px;
		top: 0;
		width: 53px;
		height: 53px;
	}

	.fall {
		display: grid;
		grid-template: 644px 34px / 1871px 49px;
		background: #000;
	}
	.waterfall {
		width: 1871px;
		height: 644px;
		font: 13.6px 'DejaVu Sans Mono', monospace;
		fill: #fff;
	}
	.axis {
		grid-row: 2;
		display: flex;
		background: #fff;
	}
	.axis button {
		display: flex;
		align-items: center;
		justify-content: center;
		background: #fdfdfd;
		border: 1px solid #c9c9c9;
		border-radius: 4px;
		box-sizing: border-box;
	}
	.rewind {
		width: 31px;
		margin: 1px 1px 1px 2px;
	}
	.rewind svg,
	.forward svg {
		width: 23px;
		height: 23px;
		margin: 0 1px 1px 0;
	}
	.freq {
		width: 1687px;
		height: 34px;
		font-size: 15.6px;
		fill: #a8a8a8;
	}
	.zoom {
		display: flex;
		gap: 2px;
		padding: 2px 3px 1px 1px;
	}
	.kbd {
		width: 47px;
	}
	.kbd svg {
		width: 22px;
		height: 18px;
		margin: 0 2px 2px 0;
	}
	.factor {
		width: 64px;
		gap: 22px;
		padding: 0 0 2px 7px;
	}
	.factor i {
		border: 5px solid transparent;
		border-left-color: #000;
		border-right: 0;
	}
	.forward {
		width: 31px;
	}
	.scale {
		grid-column: 2;
		grid-row: 1 / 3;
		width: 49px;
		height: 678px;
		font-size: 10px;
		fill: #aaa6a8;
		text-anchor: middle;
	}
	.over {
		fill: #d0c4cc;
		fill-opacity: 0.8;
	}

	.status {
		display: flex;
		align-items: center;
		height: 31px;
		padding: 0 5px 0 9px;
		box-sizing: border-box;
		background: #efefef;
		border-top: 1px solid #fff;
		font-size: 13.5px;
		letter-spacing: -0.15px;
	}
	.device {
		flex: 1;
		color: #777;
		letter-spacing: 0.1px;
	}
	.bar {
		width: 70px;
		height: 15px;
		box-sizing: border-box;
		margin: 0 14px 0 15px;
		padding: 2px;
		background: #e6e6e6;
		border: 1px solid #bcbcbc;
	}
	.bar:last-child {
		margin: 0 0 0 14px;
	}
	.bar b {
		display: block;
		width: 52px;
		height: 9px;
		background: #08ae24;
	}

	/* floating tool window over the receiver view */
	.history {
		position: absolute;
		left: 276px;
		top: 28px;
		width: 1643px;
		height: 288px;
		box-sizing: border-box;
		padding: 3px 2px 3px 4px;
		background: #f2f2f2;
		border-right: 1px solid #8c8c8c;
		border-bottom: 1px solid #7c7c7c;
	}
	.history-title {
		display: flex;
		align-items: center;
		justify-content: space-between;
		height: 29px;
		padding: 0 6px 0 2px;
		box-sizing: border-box;
		background: #beccd9;
	}
	.history-title svg {
		width: 10px;
		height: 10px;
	}
	.history-body {
		display: flex;
		height: 252px;
		background: #000;
	}
	.tools {
		display: flex;
		flex-direction: column;
		gap: 4px;
		width: 36px;
		padding: 4px 4px 0;
		box-sizing: border-box;
	}
	.tools button {
		height: 28px;
		width: 28px;
		background: linear-gradient(#252525, #383838 50%, #000 50%);
		border: 1px solid #444;
		box-sizing: border-box;
	}
	.tools button.on {
		background: radial-gradient(circle at 50% 100%, #8c8600 0, #5f5a00 30%, transparent 48%), linear-gradient(#2c2c2c, #424242 50%, #000 50%);
		border-color: #888;
	}
	.tools svg {
		width: 26px;
		height: 26px;
	}
	.plot {
		width: 1601px;
		height: 252px;
		font-size: 9.5px;
		fill: #fff;
	}
	.mid {
		text-anchor: middle;
	}
	.reading {
		font-size: 16.4px;
		fill: #fff;
	}

	.taskbar {
		display: flex;
		justify-content: space-between;
		height: 60px;
		box-sizing: border-box;
		padding: 0 19px 1px 639px;
		background: #e2e1f7;
		border-top: 1px solid #b2b1c9;
	}
	.apps {
		display: flex;
		align-items: center;
		gap: 25px;
	}
	.win {
		width: 30px;
		height: 30px;
	}
	.app {
		width: 30px;
		height: 30px;
	}
	.search {
		display: flex;
		align-items: center;
		gap: 13px;
		width: 273px;
		height: 39px;
		margin: 0 -9px 0 -7px;
		padding-left: 13px;
		box-sizing: border-box;
		background: #f6f6fd;
		border: 1px solid #d4d3e6;
		border-bottom-color: #bbbad0;
		border-radius: 20px;
		font-size: 16px;
		color: #4c4c54;
	}
	.search svg {
		width: 18px;
		height: 18px;
	}
	.running {
		position: relative;
	}
	.running i {
		position: absolute;
		left: 11px;
		bottom: -8px;
		width: 8px;
		height: 3px;
		border-radius: 2px;
		background: #85849a;
	}
	.tray {
		display: flex;
		align-items: center;
	}
	.chev {
		width: 14px;
		height: 10px;
		margin-right: 23px;
	}
	.wifi,
	.vol,
	.bat {
		width: 20px;
		height: 16px;
		margin-right: 10px;
	}
	.clock {
		display: flex;
		flex-direction: column;
		align-items: flex-end;
		width: 83px;
		line-height: 20px;
		font-size: 14px;
	}
</style>
